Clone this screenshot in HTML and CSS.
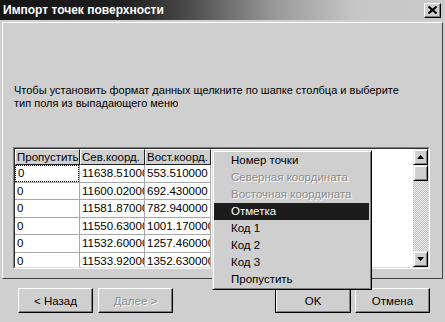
FILE: index.html
```html
<!DOCTYPE html>
<html>
<head>
<meta charset="utf-8">
<link rel="stylesheet" href="styles.css">
</head>
<body>
<div class="window">
  <div class="titlebar">
    <span class="title">Импорт точек поверхности</span>
    <span class="close"><svg width="9" height="8" viewBox="0 0 9 8"><path d="M0.5 0.5 L8.5 7.5 M8.5 0.5 L0.5 7.5" stroke="#000" stroke-width="2"/></svg></span>
  </div>
  <div class="panel">
    <p class="hint">Чтобы установить формат данных щелкните по шапке столбца и выберите<br>тип поля из выпадающего меню</p>
    <div class="grid-frame">
      <div class="grid-inner">
        <div class="grid">
          <div class="row head">
            <div class="cell c1">Пропустить</div>
            <div class="cell c2">Сев.коорд.</div>
            <div class="cell c3">Вост.коорд.</div>
          </div>
          <div class="row">
            <div class="cell c1"><span class="focus">0</span></div>
            <div class="cell c2">11638.510000</div>
            <div class="cell c3">553.510000</div>
          </div>
          <div class="row">
            <div class="cell c1">0</div>
            <div class="cell c2">11600.020000</div>
            <div class="cell c3">692.430000</div>
          </div>
          <div class="row">
            <div class="cell c1">0</div>
            <div class="cell c2">11581.870000</div>
            <div class="cell c3">782.940000</div>
          </div>
          <div class="row">
            <div class="cell c1">0</div>
            <div class="cell c2">11550.630000</div>
            <div class="cell c3">1001.170000</div>
          </div>
          <div class="row">
            <div class="cell c1">0</div>
            <div class="cell c2">11532.600000</div>
            <div class="cell c3">1257.460000</div>
          </div>
          <div class="row">
            <div class="cell c1">0</div>
            <div class="cell c2">11533.920000</div>
            <div class="cell c3">1352.630000</div>
          </div>
        </div>
        <div class="vscroll">
          <div class="sbtn"><svg width="7" height="4" viewBox="0 0 7 4"><path d="M3.5 0 L7 4 L0 4 Z" fill="#000"/></svg></div>
          <div class="sbtn thumb"></div>
          <div class="track"></div>
          <div class="sbtn"><svg width="7" height="4" viewBox="0 0 7 4"><path d="M0 0 L7 0 L3.5 4 Z" fill="#000"/></svg></div>
        </div>
      </div>
    </div>
  </div>
  <div class="buttons">
    <div class="btn">&lt; Назад</div>
    <div class="btn disabled">Далее &gt;</div>
    <div class="spacer"></div>
    <div class="btn default"><div class="btn-in">OK</div></div>
    <div class="btn">Отмена</div>
  </div>
  <div class="menu">
    <div class="item">Номер точки</div>
    <div class="item disabled">Северная координата</div>
    <div class="item disabled">Восточная координата</div>
    <div class="item active">Отметка</div>
    <div class="item">Код 1</div>
    <div class="item">Код 2</div>
    <div class="item">Код 3</div>
    <div class="item">Пропустить</div>
  </div>
</div>
</body>
</html>
```

FILE: styles.css
```css
html, body {
  margin: 0;
  padding: 0;
}
body {
  background: #cfcfcf;
  font-family: "Liberation Sans", Arial, sans-serif;
  font-size: 11px;
  color: #000;
}
.window {
  position: relative;
  width: 445px;
  height: 322px;
  overflow: hidden;
  background: #cfcfcf;
}
.titlebar {
  height: 20px;
  display: flex;
  align-items: center;
  justify-content: space-between;
  background: linear-gradient(to right, #141414 0%, #1e1e1e 28%, #4a4a4a 42%, #9a9a9a 62%, #c6c6c6 80%, #cacaca 100%);
}
.title {
  color: #fff;
  font-weight: bold;
  font-size: 12px;
  padding-left: 3px;
}
.close {
  width: 15px;
  height: 13px;
  margin-right: 4px;
  background: #cfcfcf;
  border-top: 1px solid #fff;
  border-left: 1px solid #fff;
  border-right: 1px solid #000;
  border-bottom: 1px solid #000;
  box-shadow: inset -1px -1px 0 #808080;
  display: flex;
  align-items: center;
  justify-content: center;
}
.panel {
  margin: 2px 2px 0 2px;
  height: 255px;
  border-top: 1px solid #fff;
  border-left: 1px solid #fff;
  border-right: 1px solid #404040;
  border-bottom: 1px solid #404040;
  padding: 0 0 0 10px;
}
.hint {
  margin: 61px 0 0 1px;
  line-height: 13px;
  font-size: 11px;
  white-space: nowrap;
}
.grid-frame {
  margin-top: 37px;
  width: 415px;
  height: 120px;
  border-top: 1px solid #808080;
  border-left: 1px solid #808080;
  border-right: 1px solid #fff;
  border-bottom: 1px solid #fff;
}
.grid-inner {
  height: 118px;
  border-top: 1px solid #303030;
  border-left: 1px solid #303030;
  border-right: 1px solid #dcdcdc;
  border-bottom: 1px solid #dcdcdc;
  background: #fff;
  display: flex;
  overflow: hidden;
}
.grid {
  flex: 1;
  overflow: hidden;
}
.row {
  display: flex;
  height: 17.55px;
}
.row.head {
  height: 16px;
}
.cell {
  box-sizing: border-box;
  padding-left: 2px;
  white-space: nowrap;
  overflow: hidden;
  text-overflow: clip;
  border-right: 1px solid #a8a8a8;
  border-bottom: 1px solid #a8a8a8;
  line-height: 16px;
  font-size: 11.5px;
}
.c1 { width: 65px; }
.c2 { width: 65px; }
.c3 { width: 66px; }
.head .cell {
  background: #cfcfcf;
  border-top: 1px solid #fff;
  border-left: 1px solid #fff;
  border-right: 1px solid #202020;
  border-bottom: 1px solid #202020;
  line-height: 14px;
  padding-left: 1px;
}
.focus {
  display: block;
  margin-left: -2px;
  padding-left: 2px;
  height: 15px;
  border: 1px dotted #000;
  line-height: 15px;
}
.vscroll {
  width: 15px;
  display: flex;
  flex-direction: column;
  background-color: #e4e4e4;
  background-image: repeating-conic-gradient(#bdbdbd 0 25%, #f2f2f2 0 50%);
  background-size: 2px 2px;
}
.sbtn {
  box-sizing: border-box;
  height: 16px;
  background: #cfcfcf;
  border-top: 1px solid #e8e8e8;
  border-left: 1px solid #e8e8e8;
  border-right: 1px solid #000;
  border-bottom: 1px solid #000;
  box-shadow: inset 1px 1px 0 #fff, inset -1px -1px 0 #808080;
  display: flex;
  align-items: center;
  justify-content: center;
}
.track {
  flex: 1;
}
.buttons {
  display: flex;
  margin: 9px 15px 0 18px;
  gap: 5px;
}
.spacer {
  flex: 1;
}
.btn {
  box-sizing: border-box;
  width: 75px;
  height: 25px;
  background: #cfcfcf;
  border-top: 1px solid #fff;
  border-left: 1px solid #fff;
  border-right: 1px solid #000;
  border-bottom: 1px solid #000;
  box-shadow: inset -1px -1px 0 #808080;
  display: flex;
  align-items: center;
  justify-content: center;
  font-size: 11.5px;
}
.btn.disabled {
  color: #8a8a8a;
  text-shadow: 1px 1px 0 #fff;
}
.btn.default {
  width: 76px;
  border: 1px solid #000;
  box-shadow: none;
  margin-right: -1px;
}
.btn-in {
  box-sizing: border-box;
  width: 100%;
  height: 100%;
  border-top: 1px solid #fff;
  border-left: 1px solid #fff;
  border-right: 1px solid #808080;
  border-bottom: 1px solid #808080;
  display: flex;
  align-items: center;
  justify-content: center;
}
.menu {
  position: absolute;
  left: 212px;
  top: 150px;
  width: 160px;
  height: 140px;
  box-sizing: border-box;
  background: #cfcfcf;
  border-top: 1px solid #dcdcdc;
  border-left: 1px solid #dcdcdc;
  border-right: 1px solid #000;
  border-bottom: 1px solid #000;
  box-shadow: inset 1px 1px 0 #fff, inset -1px -1px 0 #808080;
  padding: 1px 2px 0 1px;
}
.item {
  height: 17px;
  line-height: 17px;
  padding-left: 17px;
  font-size: 11.5px;
  white-space: nowrap;
}
.item.disabled {
  color: #8c8c8c;
  text-shadow: 1px 1px 0 #fff;
}
.item.active {
  background: #1c1c1c;
  color: #fff;
}
```
